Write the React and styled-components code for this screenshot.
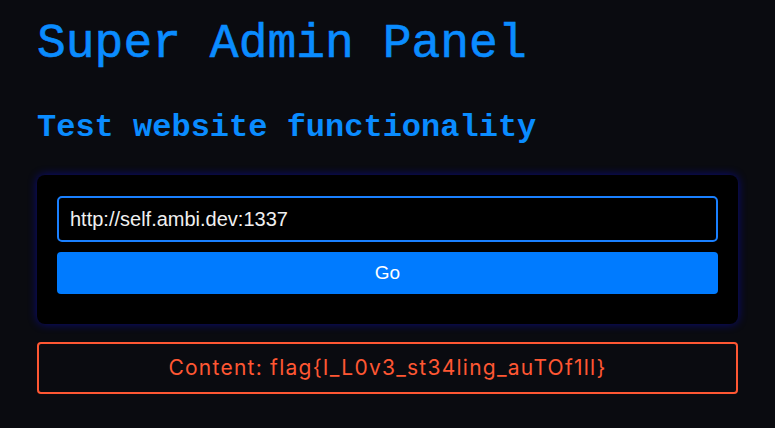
import styled, { createGlobalStyle } from "styled-components";

const GlobalStyle = createGlobalStyle`
	html, body {
		margin: 0;
		padding: 0;
		background: #0a0b10;
	}
	* {
		box-sizing: border-box;
	}
`;

export default function App() {
	return (
		<>
			<GlobalStyle />
			<Page>
				<Title>Super Admin Panel</Title>
				<Subtitle>Test website functionality</Subtitle>
				<Card>
					<UrlInput defaultValue="http://self.ambi.dev:1337" />
					<GoButton>Go</GoButton>
				</Card>
				<Result>Content: flag{"{"}I_L0v3_st34ling_auTOf1ll{"}"}</Result>
			</Page>
		</>
	);
}

const Page = styled.div`
	padding: 16px 37px 20px;
	display: flex;
	flex-direction: column;
`;

const Title = styled.h1`
	margin: 0;
	font-family: "Liberation Mono", "DejaVu Sans Mono", monospace;
	font-weight: 400;
	font-size: 48px;
	line-height: 56px;
	color: #0a8cff;
	-webkit-text-stroke: 0.6px #0a8cff;
`;

const Subtitle = styled.h2`
	margin: 37px 0 0;
	font-family: "Liberation Mono", "DejaVu Sans Mono", monospace;
	font-weight: 700;
	font-size: 32px;
	line-height: 38px;
	color: #0a8cff;
`;

const Card = styled.div`
	margin-top: 28px;
	padding: 21px 20px 30px;
	display: flex;
	flex-direction: column;
	gap: 10px;
	background: #000;
	border-radius: 8px;
	box-shadow: 0 0 10px rgba(10, 10, 255, 0.45);
`;

const UrlInput = styled.input`
	width: 100%;
	padding: 10px 11px;
	font-family: "Liberation Sans", Arial, sans-serif;
	font-size: 20px;
	line-height: 22px;
	color: #f0f0f0;
	background: #000;
	border: 2px solid #1a80ff;
	border-radius: 5px;
	outline: none;
`;

const GoButton = styled.button`
	width: 100%;
	padding: 10px;
	font-family: "Liberation Sans", Arial, sans-serif;
	font-size: 19px;
	line-height: 22px;
	color: #fff;
	background: #007bff;
	border: none;
	border-radius: 4px;
	cursor: pointer;
`;

const Result = styled.div`
	margin-top: 18px;
	padding: 12px;
	text-align: center;
	font-family: Inter, "Noto Sans", sans-serif;
	font-size: 21px;
	letter-spacing: 1.25px;
	line-height: 24px;
	color: #ff5733;
	border: 2px solid #ff5733;
	border-radius: 4px;
`;
